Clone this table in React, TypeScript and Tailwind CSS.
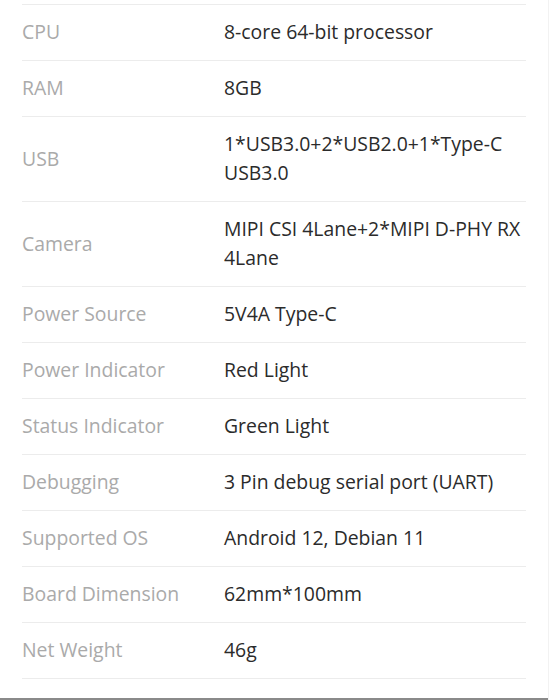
const specs: [string, string][] = [
  ["CPU", "8-core 64-bit processor"],
  ["RAM", "8GB"],
  ["USB", "1*USB3.0+2*USB2.0+1*Type-C USB3.0"],
  ["Camera", "MIPI CSI 4Lane+2*MIPI D-PHY RX 4Lane"],
  ["Power Source", "5V4A Type-C"],
  ["Power Indicator", "Red Light"],
  ["Status Indicator", "Green Light"],
  ["Debugging", "3 Pin debug serial port (UART)"],
  ["Supported OS", "Android 12, Debian 11"],
  ["Board Dimension", "62mm*100mm"],
  ["Net Weight", "46g"],
];

export default function App() {
  return (
    <div className="flex h-[700px] w-[549px] flex-col border-r border-[#f2f2f2] bg-white font-['Open_Sans',sans-serif]">
      <div className="flex-1 px-[22px] pt-[4px]">
        <div className="border-t border-[#ececec]">
          {specs.map(([label, value]) => (
            <div key={label} className="flex items-center border-b border-[#ececec] pt-[12px] pb-[14px] text-[19.4px] leading-[29px]">
              <div className="w-[202px] shrink-0 text-[#aaaaaa]">{label}</div>
              <div className="flex-1 text-[#2b2b2b]">{value}</div>
            </div>
          ))}
        </div>
      </div>
      <div className="h-[2px] bg-[#8a8a8a]" />
    </div>
  );
}
